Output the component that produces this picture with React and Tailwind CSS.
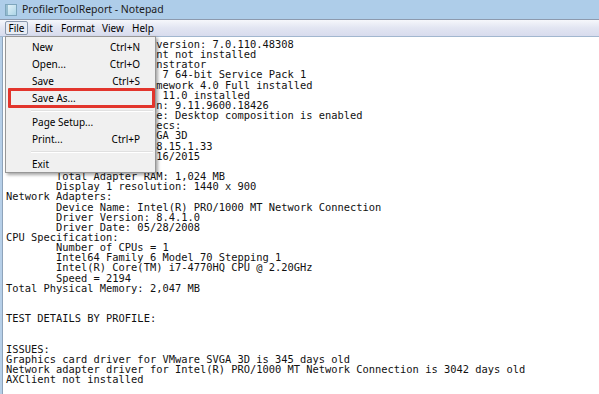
import React from 'react';

// Top lines: their first 24 columns sit under the open File menu, so only the tail shows.
const covered = [
  'version: 7.0.110.48308',
  'nt not installed',
  'nstrator',
  ' 7 64-bit Service Pack 1',
  'mework 4.0 Full installed',
  ' 11.0 installed',
  'n: 9.11.9600.18426',
  'e: Desktop composition is enabled',
  'ecs:',
  'GA 3D',
  '8.15.1.33',
  '16/2015',
  '',
];

const lines = [
  '        Total Adapter RAM: 1,024 MB',
  '        Display 1 resolution: 1440 x 900',
  'Network Adapters:',
  '        Device Name: Intel(R) PRO/1000 MT Network Connection',
  '        Driver Version: 8.4.1.0',
  '        Driver Date: 05/28/2008',
  'CPU Specification:',
  '        Number of CPUs = 1',
  '        Intel64 Family 6 Model 70 Stepping 1',
  '        Intel(R) Core(TM) i7-4770HQ CPU @ 2.20GHz',
  '        Speed = 2194',
  'Total Physical Memory: 2,047 MB',
  '',
  '',
  'TEST DETAILS BY PROFILE:',
  '',
  '',
  'ISSUES:',
  'Graphics card driver for VMware SVGA 3D is 345 days old',
  'Network adapter driver for Intel(R) PRO/1000 MT Network Connection is 3042 days old',
  'AXClient not installed',
];

const menuItems = [
  { label: 'New', key: 'Ctrl+N' },
  { label: 'Open...', key: 'Ctrl+O' },
  { label: 'Save', key: 'Ctrl+S' },
  { label: 'Save As...' },
  { sep: 'h-[7px]' },
  { label: 'Page Setup...' },
  { label: 'Print...', key: 'Ctrl+P' },
  { sep: 'h-[8px]' },
  { label: 'Exit' },
];

function NotepadIcon() {
  return (
    <svg width="12" height="12" viewBox="0 0 12 12">
      <defs>
        <linearGradient id="np" x1="0" y1="0" x2="1" y2="1">
          <stop offset="0" stopColor="#e9f5fa" />
          <stop offset="1" stopColor="#a9d3e6" />
        </linearGradient>
      </defs>
      <rect x="0.5" y="0.5" width="11" height="11" fill="url(#np)" stroke="#7ea6bd" />
      <rect x="1" y="1" width="2" height="10" fill="#6d9fb8" opacity="0.6" />
    </svg>
  );
}

export default function App() {
  const ui = { fontFamily: '"Noto Sans", "Open Sans", sans-serif' };

  return (
    <div className="relative w-[599px] h-[394px] overflow-hidden bg-white flex flex-col" style={ui}>
      {/* Title bar */}
      <div className="h-[19px] bg-[#aecde9] flex items-center pl-[5px] gap-[5px]">
        <NotepadIcon />
        <span className="text-[10.5px] text-[#1b1b1b] leading-none">ProfilerToolReport - Notepad</span>
      </div>

      {/* Menu bar */}
      <div className="h-[18px] border-t border-b border-t-[#8d9aae] border-b-[#a2b7cf] bg-gradient-to-b from-[#f6f7fb] via-[#e2e5f2] to-[#d8dcee] flex items-center text-[10px] text-black">
        <div className="ml-[5px] w-[23px] h-[14px] flex items-center justify-center border border-[#8a98ad] rounded-[2px] bg-[#e9edf5]">File</div>
        <div className="w-[26px] pl-[7px]">Edit</div>
        <div className="w-[41px] pl-[7px]">Format</div>
        <div className="w-[30px] pl-[7px]">View</div>
        <div className="w-[28px] pl-[7px]">Help</div>
      </div>

      {/* Editor */}
      <div className="flex-1 flex">
        <div className="w-[3px] bg-[#b6cfe8] border-r border-[#8ea3ba]" />
        <div
          className="flex-1 pl-[3px] pt-[2px] text-[10.4px] leading-[10.17px] text-[#111] whitespace-pre"
          style={{ fontFamily: '"DejaVu Sans Mono", "Liberation Mono", monospace' }}
        >
          {covered.map((l, i) => (
            <div key={'c' + i} className="h-[10.17px] pl-[24ch]">{l}</div>
          ))}
          {lines.map((l, i) => (
            <div key={i} className="h-[10.17px]">{l}</div>
          ))}
        </div>
      </div>

      {/* File menu dropdown */}
      <div className="absolute left-[5px] top-[36px] w-[151px] h-[137px] bg-[#f0f0f0] border border-[#979797] shadow-[2px_2px_3px_rgba(0,0,0,0.35)] pt-[2px] text-[10px] text-black">
        {menuItems.map((m, i) =>
          m.sep ? (
            <div key={i} className={`${m.sep} flex items-center pl-[25px] pr-[2px]`}>
              <div className="w-full h-[2px] border-t border-[#e0e0e0] border-b border-b-white" />
            </div>
          ) : (
            <div key={i} className="h-[17px] flex items-center justify-between pl-[26px] pr-[15px]">
              <span>{m.label}</span>
              {m.key && <span>{m.key}</span>}
            </div>
          )
        )}
      </div>

      {/* Red highlight around Save As */}
      <div className="absolute left-[8px] top-[88px] w-[147px] h-[20px] border-[3px] border-[#e2352c] rounded-[1px]" />
    </div>
  );
}
